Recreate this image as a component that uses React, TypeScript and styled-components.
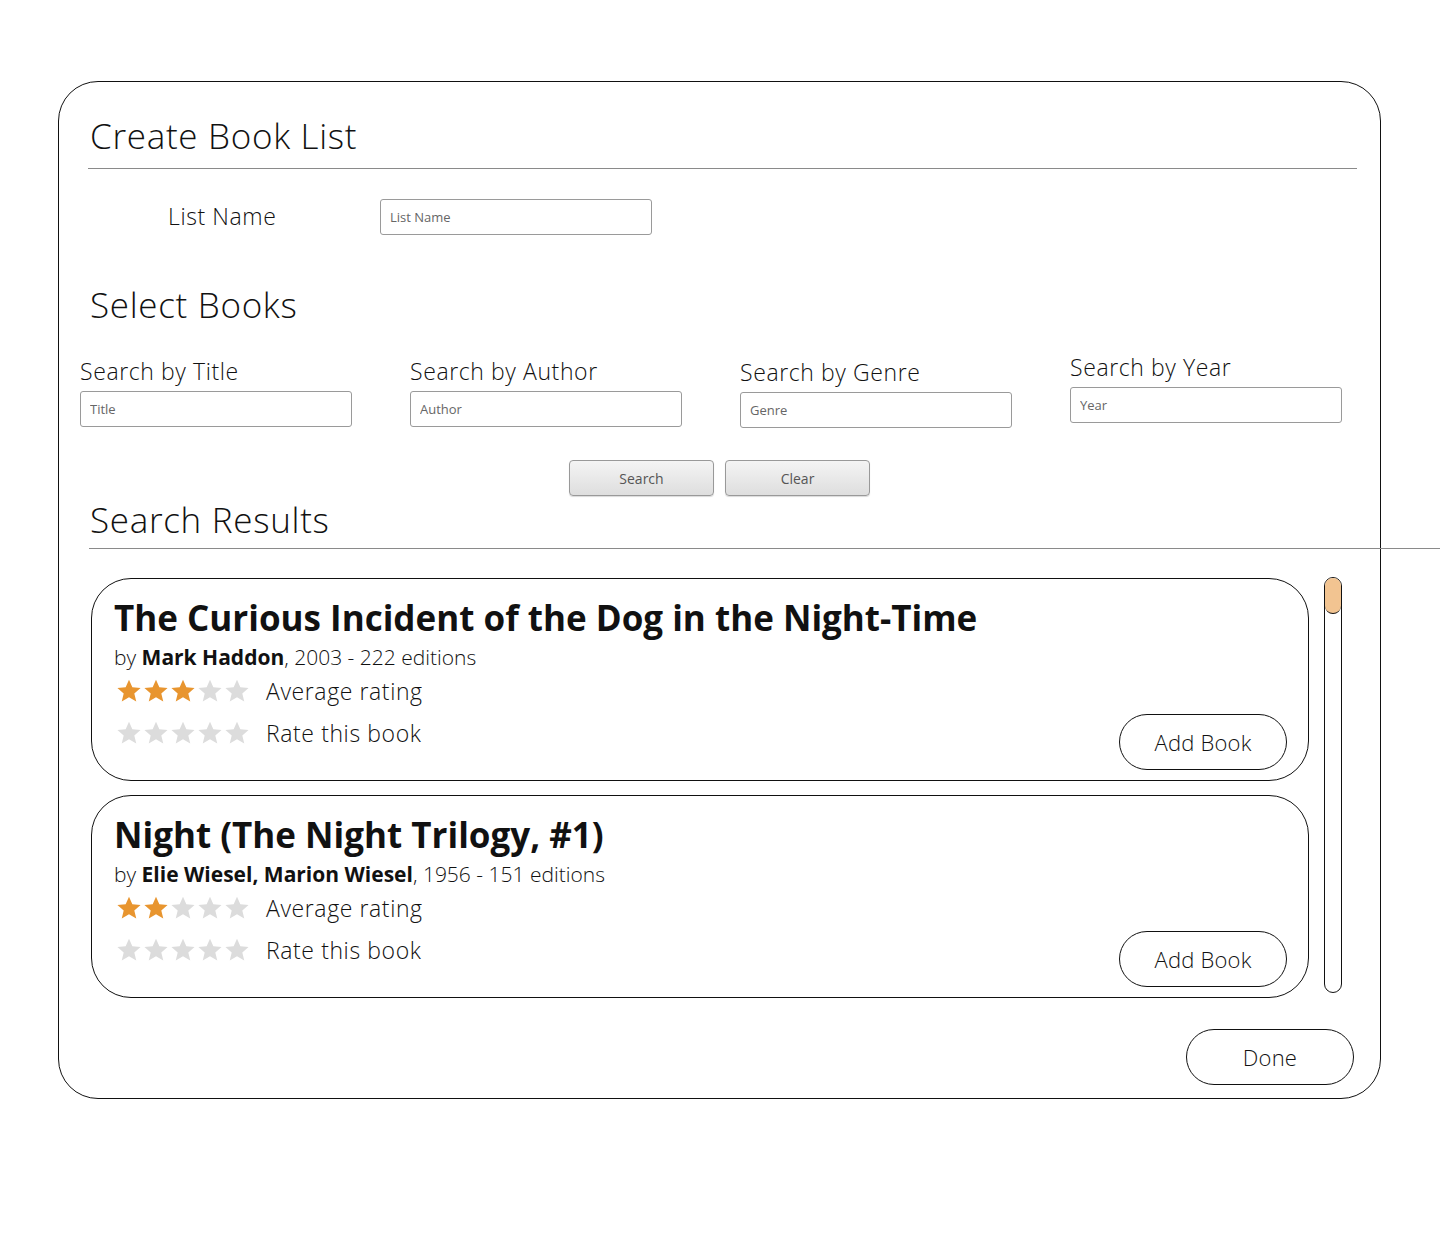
import React from "react";
import styled, { createGlobalStyle } from "styled-components";

const GlobalStyle = createGlobalStyle`
    body {
        margin: 0;
        background: #fff;
        font-family: "Open Sans", "Noto Sans", sans-serif;
        color: #111;
    }
`

interface bookType {
    title: string,
    authors: string,
    year: number,
    editions: number,
    rating: number,
}

const books: bookType[] = [
    { title: "The Curious Incident of the Dog in the Night-Time", authors: "Mark Haddon", year: 2003, editions: 222, rating: 3 },
    { title: "Night (The Night Trilogy, #1)", authors: "Elie Wiesel, Marion Wiesel", year: 1956, editions: 151, rating: 2 },
]

const searchFields = [
    { label: "Search by Title", placeholder: "Title", shift: 0 },
    { label: "Search by Author", placeholder: "Author", shift: 0 },
    { label: "Search by Genre", placeholder: "Genre", shift: 1 },
    { label: "Search by Year", placeholder: "Year", shift: -4 },
]

const Page = styled.div`
    width: 1440px;
    height: 1248px;
    padding-top: 81px;
    box-sizing: border-box;
`

const Frame = styled.div`
    margin-left: 58px;
    width: 1323px;
    height: 1018px;
    box-sizing: border-box;
    border: 1px solid #111;
    border-radius: 40px;
    display: flex;
    flex-direction: column;
`

const Heading = styled.h1<{ $top: number, $bottom: number }>`
    margin: ${p => p.$top}px 0 ${p => p.$bottom}px 31px;
    font-size: 35px;
    font-weight: 300;
    letter-spacing: 0.7px;
    line-height: 44px;
`

const Rule = styled.div`
    height: 1px;
    background: #8a8a8a;
    margin: 0 23px 0 29px;
`

const WideRule = styled.div`
    height: 1px;
    background: #8a8a8a;
    margin: 0 -61px 0 30px;
`

const NameRow = styled.div`
    display: flex;
    align-items: center;
    margin: 30px 0 0 109px;
    gap: 106px;
`

const Label = styled.span`
    font-size: 23px;
    font-weight: 300;
    letter-spacing: 0.6px;
    line-height: 28px;
    white-space: nowrap;
`

const NameLabel = styled(Label)`
    width: 106px;
    margin-top: -3px;
`

const Input = styled.input`
    width: 272px;
    height: 36px;
    box-sizing: border-box;
    border: 1px solid #9a9a9a;
    border-radius: 3px;
    padding: 0 9px;
    font-family: "Open Sans", "Noto Sans", sans-serif;
    font-size: 13px;
    outline: none;
    &::placeholder {
        color: #666;
    }
`

const SearchGrid = styled.div`
    display: grid;
    grid-template-columns: repeat(4, 330px);
    margin: 30px 0 0 21px;
    align-items: start;
`

const Field = styled.div<{ $shift: number }>`
    display: flex;
    flex-direction: column;
    gap: 6px;
    margin-top: ${p => p.$shift}px;
`

const ButtonRow = styled.div`
    display: flex;
    justify-content: center;
    gap: 11px;
    margin-top: 32px;
`

const GrayButton = styled.button`
    width: 145px;
    height: 36px;
    border: 1px solid #999;
    border-radius: 4px;
    background: linear-gradient(#f4f4f4, #dedede);
    box-shadow: 0 1px 1px rgba(0,0,0,0.15);
    font-family: "Open Sans", "Noto Sans", sans-serif;
    font-size: 14px;
    color: #555;
`

const Results = styled.div`
    display: flex;
    gap: 15px;
    margin: 29px 0 0 32px;
    align-items: flex-start;
`

const CardList = styled.div`
    display: flex;
    flex-direction: column;
    gap: 14px;
`

const Card = styled.div`
    width: 1218px;
    height: 203px;
    box-sizing: border-box;
    border: 1px solid #111;
    border-radius: 40px;
    padding: 15px 20px 0 22px;
    position: relative;
`

const BookTitle = styled.h2`
    margin: 0;
    font-size: 35px;
    font-weight: 700;
    line-height: 48px;
`

const Byline = styled.div`
    margin-top: 2px;
    font-size: 21px;
    font-weight: 300;
    line-height: 26px;
    & b {
        font-weight: 700;
    }
`

const RatingRow = styled.div`
    display: flex;
    align-items: center;
    gap: 16px;
    height: 42px;
`

const Stars = styled.div`
    display: flex;
    gap: 1px;
    margin-left: 2px;
`

const AddButton = styled.button`
    position: absolute;
    right: 21px;
    bottom: 10px;
    width: 168px;
    height: 56px;
    border: 1px solid #111;
    border-radius: 28px;
    background: #fff;
    font-family: "Open Sans", "Noto Sans", sans-serif;
    font-size: 22px;
    font-weight: 300;
    letter-spacing: 0.2px;
    color: #111;
`

const ScrollTrack = styled.div`
    width: 18px;
    height: 416px;
    margin-top: -1px;
    box-sizing: border-box;
    border: 1px solid #111;
    border-radius: 9px;
    overflow: hidden;
`

const ScrollThumb = styled.div`
    height: 35px;
    background: #f2c491;
    border-bottom: 1px solid #111;
    border-radius: 0 0 9px 9px;
`

const Footer = styled.div`
    display: flex;
    justify-content: flex-end;
    margin: 31px 26px 0 0;
`

const DoneButton = styled(AddButton)`
    position: static;
`

function Star({ filled }: { filled: boolean }) {
    return (
        <svg width="26" height="26" viewBox="0 0 24 24">
            <path
                d="M12 1.5l3.1 7.1 7.6.6-5.8 5 1.8 7.5L12 17.8l-6.7 3.9 1.8-7.5-5.8-5 7.6-.6z"
                fill={filled ? "#e8952f" : "#dcdcdc"}
            />
        </svg>
    )
}

function StarRow({ count }: { count: number }) {
    return (
        <Stars>
            {[0, 1, 2, 3, 4].map(i => <Star key={i} filled={i < count} />)}
        </Stars>
    )
}

function BookCard({ book }: { book: bookType }) {
    return (
        <Card>
            <BookTitle>{book.title}</BookTitle>
            <Byline>by <b>{book.authors}</b>, {book.year} - {book.editions} editions</Byline>
            <RatingRow>
                <StarRow count={book.rating} />
                <Label>Average rating</Label>
            </RatingRow>
            <RatingRow>
                <StarRow count={0} />
                <Label>Rate this book</Label>
            </RatingRow>
            <AddButton>Add Book</AddButton>
        </Card>
    )
}

export default function App() {
    return (
        <Page>
            <GlobalStyle />
            <Frame>
                <Heading $top={32} $bottom={10}>Create Book List</Heading>
                <Rule />
                <NameRow>
                    <NameLabel>List Name</NameLabel>
                    <Input placeholder="List Name" />
                </NameRow>
                <Heading $top={48} $bottom={0}>Select Books</Heading>
                <SearchGrid>
                    {searchFields.map(f => (
                        <Field key={f.label} $shift={f.shift}>
                            <Label>{f.label}</Label>
                            <Input placeholder={f.placeholder} />
                        </Field>
                    ))}
                </SearchGrid>
                <ButtonRow>
                    <GrayButton>Search</GrayButton>
                    <GrayButton>Clear</GrayButton>
                </ButtonRow>
                <Heading $top={2} $bottom={6}>Search Results</Heading>
                <WideRule />
                <Results>
                    <CardList>
                        {books.map(b => <BookCard key={b.title} book={b} />)}
                    </CardList>
                    <ScrollTrack>
                        <ScrollThumb />
                    </ScrollTrack>
                </Results>
                <Footer>
                    <DoneButton>Done</DoneButton>
                </Footer>
            </Frame>
        </Page>
    )
}
